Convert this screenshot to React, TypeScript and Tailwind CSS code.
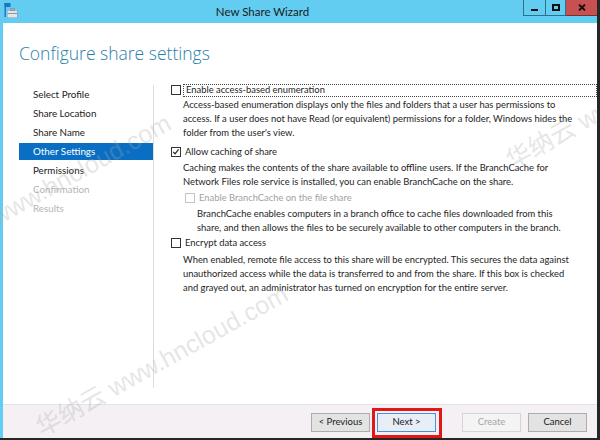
import React from "react";

const FONT = { fontFamily: "Lato, 'Liberation Sans', sans-serif" };

function Check({ checked = false, disabled = false }: { checked?: boolean; disabled?: boolean }) {
  return (
    <span
      className={
        "relative inline-flex w-[10px] h-[10px] shrink-0 border bg-white " +
        (disabled ? "border-[#c4c4c4]" : "border-[#333333]")
      }
    >
      {checked && (
        <svg viewBox="0 0 10 10" className="absolute left-0 top-0 w-[8px] h-[8px]">
          <path d="M1.5 4.8 L3.8 7.2 L8.2 1.8" fill="none" stroke="#222" strokeWidth="1.5" />
        </svg>
      )}
    </span>
  );
}

function Btn({ label, disabled = false, focused = false }: { label: string; disabled?: boolean; focused?: boolean }) {
  let cls = "w-[59px] h-[19px] flex items-center justify-center text-[9.5px] border ";
  if (disabled) cls += "bg-[#f4f4f4] border-[#d5d5d5] text-[#a5a5a5]";
  else if (focused) cls += "bg-[#e8eef6] border-[#4a90d8] text-[#1a1a1a]";
  else cls += "bg-[#e3e3e3] border-[#adadad] text-[#1a1a1a]";
  return <div className={cls}>{label}</div>;
}

const WM = { fontFamily: "'Liberation Sans', 'Noto Sans CJK SC', sans-serif" };

export default function App() {
  const nav = [
    { t: "Select Profile" },
    { t: "Share Location" },
    { t: "Share Name" },
    { t: "Other Settings", active: true },
    { t: "Permissions" },
    { t: "Confirmation", dim: true },
    { t: "Results", dim: true },
  ];
  return (
    <div
      className="relative w-[600px] h-[440px] overflow-hidden bg-[#62cdf0] flex flex-col border-r-[3px] border-b-[2px] border-[#262626]"
      style={FONT}
    >
      {/* title bar */}
      <div className="relative h-[23px] shrink-0 flex items-center justify-center">
        <svg className="absolute left-[4px] top-[3px]" width="14" height="16" viewBox="0 0 14 16">
          <rect x="0.5" y="0" width="6" height="4" fill="#1e73c8" />
          <rect x="0.5" y="0" width="1.4" height="14" fill="#1e73c8" />
          <rect x="3" y="7" width="10.5" height="8" fill="#8c98a4" />
          <rect x="3.5" y="7.5" width="9.5" height="7" fill="#dfe5ea" />
          <rect x="3.5" y="10" width="9.5" height="1" fill="#8c98a4" />
          <rect x="6.5" y="5.5" width="4" height="2" fill="none" stroke="#8c98a4" strokeWidth="1" />
        </svg>
        <span className="text-[11.5px] text-[#1b1b1b] ml-[-72px]">New Share Wizard</span>
        <div className="absolute right-0 top-0 flex h-[16px]">
          <div className="w-[23px] h-[16px] border border-t-0 border-[#2f6f8a] flex items-end justify-center pb-[4px]">
            <div className="w-[7px] h-[2px] bg-[#111]" />
          </div>
          <div className="w-[20px] h-[16px] border border-t-0 border-l-0 border-[#2f6f8a] flex items-center justify-center">
            <div className="w-[8px] h-[7px] border-2 border-[#111]" />
          </div>
          <div className="w-[31px] h-[16px] bg-[#c75050] border-b border-[#7a3030] flex items-center justify-center">
            <svg width="8" height="7" viewBox="0 0 8 7">
              <path d="M1 0.5 L7 6.5 M7 0.5 L1 6.5" stroke="#111" strokeWidth="1.8" />
            </svg>
          </div>
        </div>
      </div>

      {/* body */}
      <div className="flex-1 ml-[3px] bg-white flex flex-col">
        <div className="pt-[18px] pl-[16px] h-[62px] shrink-0">
          <h1 className="text-[17.5px] leading-[24px] text-[#2a80aa]" style={{ fontFamily: "'Open Sans', Lato, sans-serif", fontWeight: 300 }}>
            Configure share settings
          </h1>
        </div>
        <div className="flex-1 flex pb-[16px]">
          <div className="w-[151px] shrink-0 border-r border-[#dcdcdc] pt-[1px] pl-[16px]">
            {nav.map((n) => (
              <div
                key={n.t}
                className={
                  "h-[17px] mb-[2px] flex items-center pl-[14px] text-[9.8px] " +
                  (n.active ? "bg-[#0a6fc2] text-white" : n.dim ? "text-[#b4b4b4]" : "text-[#222]")
                }
              >
                {n.t}
              </div>
            ))}
          </div>
          <div className="flex-1 pl-[17px] text-[9.4px] text-[#1e1e1e] leading-[14px] whitespace-nowrap">
            <div className="h-[14px] mt-[-2px] flex items-center">
              <Check />
              <span className="ml-[2px] flex-1 h-[13px] border border-dotted border-[#444] pl-[2px] flex items-center">
                Enable access-based enumeration
              </span>
            </div>
            <div className="mt-[1px] pl-[12px]">
              Access-based enumeration displays only the files and folders that a user has permissions to
              <br />
              access. If a user does not have Read (or equivalent) permissions for a folder, Windows hides the
              <br />
              folder from the user's view.
            </div>
            <div className="h-[14px] mt-[5px] flex items-center">
              <Check checked />
              <span className="ml-[4px]">Allow caching of share</span>
            </div>
            <div className="mt-[2px] pl-[12px]">
              Caching makes the contents of the share available to offline users. If the BranchCache for
              <br />
              Network Files role service is installed, you can enable BranchCache on the share.
            </div>
            <div className="h-[14px] mt-[2px] pl-[14px] flex items-center">
              <Check disabled />
              <span className="ml-[4px] text-[#a2a2a2]">Enable BranchCache on the file share</span>
            </div>
            <div className="mt-[2px] pl-[26px]">
              BranchCache enables computers in a branch office to cache files downloaded from this
              <br />
              share, and then allows the files to be securely available to other computers in the branch.
            </div>
            <div className="h-[14px] mt-[1px] flex items-center">
              <Check />
              <span className="ml-[4px]">Encrypt data access</span>
            </div>
            <div className="mt-[3px] pl-[12px]">
              When enabled, remote file access to this share will be encrypted. This secures the data against
              <br />
              unauthorized access while the data is transferred to and from the share. If this box is checked
              <br />
              and grayed out, an administrator has turned on encryption for the entire server.
            </div>
          </div>
        </div>
        <div className="h-[34px] shrink-0 bg-[#f4f0f4] border-t border-[#e4e2e4] flex items-start justify-end pt-[8px] pr-[10px]">
          <Btn label="< Previous" />
          <div className="relative ml-[7px]">
            <Btn label="Next >" focused />
            <div className="absolute left-[-5px] right-[-6px] top-[-5px] bottom-[-6px] border-[3px] border-[#e01818]" />
          </div>
          <div className="ml-[26px]">
            <Btn label="Create" disabled />
          </div>
          <div className="ml-[7px]">
            <Btn label="Cancel" />
          </div>
        </div>
      </div>

      {/* watermark */}
      <span className="pointer-events-none absolute left-[162px] top-[361px] -translate-x-1/2 -translate-y-1/2 -rotate-[29deg] whitespace-nowrap text-[25px] text-[#a8a8a8]/30" style={WM}>
        华纳云 www.hncloud.com
      </span>
      <span className="pointer-events-none absolute left-[45px] top-[190px] -translate-x-1/2 -translate-y-1/2 -rotate-[29deg] whitespace-nowrap text-[25px] text-[#a8a8a8]/30" style={WM}>
        华纳云 www.hncloud.com
      </span>
      <span className="pointer-events-none absolute left-[632px] top-[94px] -translate-x-1/2 -translate-y-1/2 -rotate-[29deg] whitespace-nowrap text-[25px] text-[#a8a8a8]/30" style={WM}>
        华纳云 www.hncloud.com
      </span>
    </div>
  );
}
